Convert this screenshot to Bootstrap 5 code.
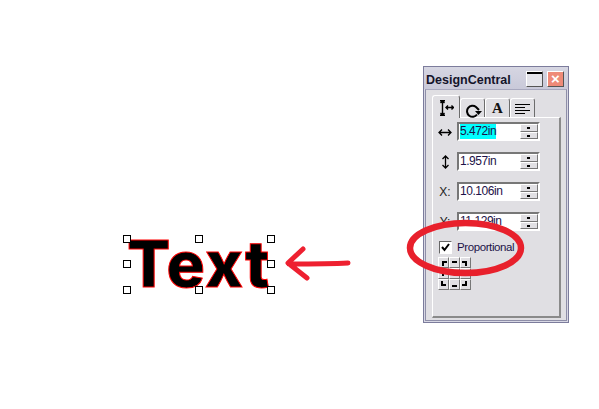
<!DOCTYPE html>
<html lang="en">
<head>
  <meta charset="UTF-8">
  <title>DesignCentral</title>
  <link href="https://cdn.jsdelivr.net/npm/bootstrap@5.3.3/dist/css/bootstrap.min.css" rel="stylesheet">
  <style>
    body { background: #fff; width: 599px; height: 409px; overflow: hidden; position: relative; margin: 0; font-family: "Liberation Sans", Arial, sans-serif; }
    /* drawing on the canvas */
    .word { position: absolute; left: 127px; top: 226px; font: 800 64px/76px Inter, "Liberation Sans", sans-serif; color: #000; -webkit-text-stroke: 1px #f00; letter-spacing: 1.2px; }
    .handle { position: absolute; width: 8px; height: 8px; background: #fff; border: 1px solid #000; }
    .scribble { position: absolute; left: 0; top: 0; pointer-events: none; }
    /* tool window */
    .tool-win { position: absolute; left: 423px; top: 66px; width: 146px; height: 257px; background: #e0dfe3; border: 1px solid #7c7c9c; box-shadow: inset 0 0 0 1px #d8d8e4; }
    .title-bar { height: 22px; padding: 4px 4px 0 2px; background: linear-gradient(#d6d6e2, #c9c9d9); }
    .title-text { font: 700 12.5px/19px "Liberation Sans", Arial, sans-serif; color: #14142a; }
    .cap-btn { width: 17px; height: 16px; border: 1px solid #fff; border-right-color: #555; border-bottom-color: #555; background: #e4e4ea; }
    .cap-min { box-shadow: inset 0 2px 0 #000; margin-right: 4px; }
    .cap-close { background: #ee8a78; color: #fff; font: 700 15px/14px "Liberation Sans", sans-serif; text-align: center; }
    .win-body { height: 232px; margin: 0 1px; border: 1px solid #8e8ea8; border-top-color: #a8a8be; padding: 5px 5px 3px 6px; }
    .tab-row { height: 22px; align-items: flex-end; }
    .tab-item { height: 19px; width: 25px; background: #e0dfe3; border: 1px solid #fff; border-right-color: #6c6c6c; border-bottom: 0; border-radius: 3px 3px 0 0; }
    .tab-on { width: 28px; position: relative; z-index: 1; margin-bottom: -1px; height: 23px; }
    .tab-page { height: 201px; border: 1px solid #fff; border-right: 2px solid #8a8a8a; border-bottom: 2px solid #8a8a8a; padding: 4px 0 0 0; }
    .field-row { height: 19px; margin-bottom: 11px; }
    .field-label { width: 24px; font-size: 12px; color: #222; text-align: center; line-height: 1; }
    .field-box { width: 83px; height: 19px; border: 2px solid; border-color: #777 #fff #fff #777; background: #fff; padding-left: 1px; font-size: 12px; line-height: 15px; letter-spacing: -.45px; color: #1c1248; }
    .field-sel { background: #00ffff; display: inline-block; height: 15px; width: 36px; }
    .spin-box { margin-left: auto; width: 18px; background: #e0dfe3; }
    .spin-btn { height: 7.5px; background: #e0dfe3; border: 1px solid #fff; border-right-color: #777; border-bottom-color: #777; position: relative; }
    .spin-btn::after { content: ""; position: absolute; left: 6px; top: 2px; width: 3px; height: 2px; background: #000; }
    .prop-row { margin: -1px 0 4px 6px; height: 12px; }
    .check-box { width: 13px; height: 13px; border: 1px solid; border-color: #666 #fff #fff #666; background: #fff; }
    .check-label { font-size: 11.5px; line-height: 13px; color: #1c1248; margin-left: 5px; letter-spacing: -.4px; }
    .anchor-grid { margin-left: 5px; display: grid; grid-template-columns: repeat(3, 11px); grid-auto-rows: 11px; width: 33px; }
    .anchor-cell { border: 1px solid #fff; border-right-color: #777; border-bottom-color: #777; background: #e0dfe3; display: flex; }
    .anchor-cell svg { width: 9px; height: 9px; }
    .anchor-mark { fill: none; stroke: #000; stroke-width: 2; }
  </style>
</head>
<body>

  <div class="word">Text</div>
  <div class="handle" style="left:123px;top:235px"></div>
  <div class="handle" style="left:195px;top:235px"></div>
  <div class="handle" style="left:267px;top:235px"></div>
  <div class="handle" style="left:123px;top:260px"></div>
  <div class="handle" style="left:267px;top:260px"></div>
  <div class="handle" style="left:123px;top:286px"></div>
  <div class="handle" style="left:195px;top:286px"></div>
  <div class="handle" style="left:267px;top:286px"></div>

  <div class="tool-win">
    <div class="title-bar d-flex align-items-start">
      <span class="title-text flex-grow-1">DesignCentral</span>
      <span class="cap-btn cap-min"></span>
      <span class="cap-btn cap-close">×</span>
    </div>
    <div class="win-body">
      <div class="tab-row d-flex">
        <div class="tab-item tab-on d-flex justify-content-center pt-1">
          <svg width="16" height="16" viewBox="0 0 16 16"><path d="M2 .7H7M4.500 1V15M2 15.300H7M2.500 3L4.500 1L6.500 3M2.500 13L4.500 15L6.500 13M8 7.500H15.500M10 5.500L8 7.500L10 9.500M13.500 5.500L15.500 7.500L13.500 9.500" fill="none" stroke="#000" stroke-width="1.400"/></svg>
        </div>
        <div class="tab-item d-flex justify-content-center pt-1">
          <svg width="18" height="15" viewBox="0 0 18 15"><path d="M13 11.500A5.500 5.500 0 1 1 12 4L15 7" fill="none" stroke="#000" stroke-width="2"/><path d="M11 8H18L14.500 12Z" fill="#000"/></svg>
        </div>
        <div class="tab-item d-flex justify-content-center">
          <span style="font:700 15px/19px 'Liberation Serif',serif;color:#111">A</span>
        </div>
        <div class="tab-item d-flex justify-content-center pt-1">
          <svg width="16" height="13" viewBox="0 0 16 13"><path d="M0 1.500H15M0 4.500H10M0 7.500H15M0 10.500H10" stroke="#000" stroke-width="1.200"/></svg>
        </div>
      </div>
      <div class="tab-page">
        <div class="field-row d-flex align-items-center">
          <div class="field-label">
            <svg width="14" height="9" viewBox="0 0 14 9"><path d="M1 4.500H13M4 1.500L1 4.500L4 7.500M10 1.500L13 4.500L10 7.500" fill="none" stroke="#000" stroke-width="1.300"/></svg>
          </div>
          <div class="field-box d-flex"><span class="field-sel">5.472in</span>
            <div class="spin-box"><div class="spin-btn"></div><div class="spin-btn"></div></div>
          </div>
        </div>
        <div class="field-row d-flex align-items-center">
          <div class="field-label">
            <svg width="9" height="14" viewBox="0 0 9 14"><path d="M4.500 1V13M1.500 4L4.500 1L7.500 4M1.500 10L4.500 13L7.500 10" fill="none" stroke="#000" stroke-width="1.300"/></svg>
          </div>
          <div class="field-box d-flex"><span>1.957in</span>
            <div class="spin-box"><div class="spin-btn"></div><div class="spin-btn"></div></div>
          </div>
        </div>
        <div class="field-row d-flex align-items-center">
          <div class="field-label">X:</div>
          <div class="field-box d-flex"><span>10.106in</span>
            <div class="spin-box"><div class="spin-btn"></div><div class="spin-btn"></div></div>
          </div>
        </div>
        <div class="field-row d-flex align-items-center">
          <div class="field-label">Y:</div>
          <div class="field-box d-flex"><span>11.129in</span>
            <div class="spin-box"><div class="spin-btn"></div><div class="spin-btn"></div></div>
          </div>
        </div>
        <div class="prop-row d-flex align-items-center">
          <div class="check-box d-flex">
            <svg width="11" height="11" viewBox="0 0 11 11"><path d="M2 5L4.500 8L9 2" fill="none" stroke="#000" stroke-width="2"/></svg>
          </div>
          <span class="check-label">Proportional</span>
        </div>
        <div class="anchor-grid">
          <div class="anchor-cell"><svg viewBox="0 0 9 9"><path class="anchor-mark" d="M4 8V4H8"/></svg></div>
          <div class="anchor-cell"><svg viewBox="0 0 9 9"><path class="anchor-mark" d="M2 4H7"/></svg></div>
          <div class="anchor-cell"><svg viewBox="0 0 9 9"><path class="anchor-mark" d="M1 4H5V8"/></svg></div>
          <div class="anchor-cell"><svg viewBox="0 0 9 9"><path class="anchor-mark" d="M4 2V7"/></svg></div>
          <div class="anchor-cell"></div>
          <div class="anchor-cell"><svg viewBox="0 0 9 9"><path class="anchor-mark" d="M5 2V7"/></svg></div>
          <div class="anchor-cell"><svg viewBox="0 0 9 9"><path class="anchor-mark" d="M3 1V5H7"/></svg></div>
          <div class="anchor-cell"><svg viewBox="0 0 9 9"><path class="anchor-mark" d="M2 6H7"/></svg></div>
          <div class="anchor-cell"><svg viewBox="0 0 9 9"><path class="anchor-mark" d="M1 5H5V1"/></svg></div>
        </div>
      </div>
    </div>
  </div>

  <svg class="scribble" width="599" height="409" viewBox="0 0 599 409">
    <ellipse cx="465.500" cy="248" rx="55.500" ry="25" fill="none" stroke="#e8202c" stroke-width="6.500"/>
    <path d="M348 263C330 264 310 264 289 264M303 249L288 263L307 278" fill="none" stroke="#ee2030" stroke-width="5" stroke-linecap="round" stroke-linejoin="round"/>
  </svg>

</body>
</html>
